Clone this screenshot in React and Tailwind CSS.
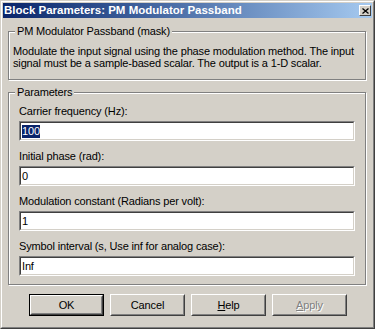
const Field = ({ children }) => (
  <div className="h-[20px] w-[336px] border border-t-[#808080] border-l-[#808080] border-r-white border-b-white">
    <div className="h-full border border-t-[#404040] border-l-[#404040] border-r-[#d4d0c8] border-b-[#d4d0c8] bg-white flex items-center pl-[1px] text-black">
      {children}
    </div>
  </div>
);

const Param = ({ label, value, selected }) => (
  <div className="flex flex-col">
    <div className="h-[13px] leading-[13px]">{label}</div>
    <div className="mt-[3px]">
      <Field>
        {selected ? <span className="bg-[#0a246a] text-white leading-[13px]">{value}</span> : <span className="leading-[13px]">{value}</span>}
      </Field>
    </div>
  </div>
);

const Button = ({ children, isDefault, disabled }) => {
  const inner = (
    <div className="h-full border border-t-white border-l-white border-r-[#404040] border-b-[#404040]">
      <div className="h-full border border-t-[#d4d0c8] border-l-[#d4d0c8] border-r-[#808080] border-b-[#808080] flex items-center justify-center">
        {children}
      </div>
    </div>
  );
  return (
    <div className={`w-[75px] h-[22px] ${isDefault ? 'border border-black' : ''} ${disabled ? 'text-[#808080] [text-shadow:1px_1px_0_#ffffff]' : 'text-black'}`}>
      {inner}
    </div>
  );
};

const GroupBox = ({ title, className, children }) => (
  <div className={`relative border border-[#808080] shadow-[inset_1px_1px_0_#ffffff,1px_1px_0_#ffffff] ${className}`}>
    <div className="absolute -top-[7px] left-[6px] px-[2px] bg-[#d4d0c8] h-[13px] leading-[13px]">{title}</div>
    {children}
  </div>
);

export default function App() {
  return (
    <div className="w-[375px] h-[329px] bg-[#d4d0c8] font-['Liberation_Sans',Arial,sans-serif] text-[11px] tracking-[-0.15px] text-black">
      <div className="h-full border border-t-[#d4d0c8] border-l-[#d4d0c8] border-r-[#404040] border-b-[#404040]">
        <div className="h-full border border-t-white border-l-white border-r-[#808080] border-b-[#808080] p-[1px] flex flex-col">
          <div className="h-[15px] bg-linear-to-r from-[#0a246a] to-[#a6caf0] flex items-center justify-between pl-[1px] pr-[1px]">
            <span className="text-white font-bold text-[11.5px] tracking-normal leading-[15px]">Block Parameters: PM Modulator Passband</span>
            <div className="w-[12px] h-[11px] bg-[#d4d0c8] border border-t-white border-l-white border-r-[#404040] border-b-[#404040] flex items-center justify-center">
              <svg width="7" height="6" viewBox="0 0 7 6">
                <path d="M0.5 0.5 L6.5 5.5 M6.5 0.5 L0.5 5.5" stroke="#000" strokeWidth="1.3" fill="none" />
              </svg>
            </div>
          </div>

          <GroupBox title="PM Modulator Passband (mask)" className="ml-[5px] mt-[13px] w-[358px] h-[49px]">
            <div className="pt-[13px] pl-[4px] leading-[12px]">
              <div>Modulate the input signal using the phase modulation method. The input</div>
              <div>signal must be a sample-based scalar. The output is a 1-D scalar.</div>
            </div>
          </GroupBox>

          <GroupBox title="Parameters" className="ml-[5px] mt-[12px] w-[358px] h-[193px]">
            <div className="pt-[12px] pl-[10px] flex flex-col gap-[9px]">
              <Param label="Carrier frequency (Hz):" value="100" selected />
              <Param label="Initial phase (rad):" value="0" />
              <Param label="Modulation constant (Radians per volt):" value="1" />
              <Param label="Symbol interval (s, Use inf for analog case):" value="Inf" />
            </div>
          </GroupBox>

          <div className="mt-[9px] ml-[26px] flex gap-[6px]">
            <Button isDefault>OK</Button>
            <Button>Cancel</Button>
            <Button><span><span className="underline">H</span>elp</span></Button>
            <Button disabled><span><span className="underline">A</span>pply</span></Button>
          </div>
        </div>
      </div>
    </div>
  );
}
